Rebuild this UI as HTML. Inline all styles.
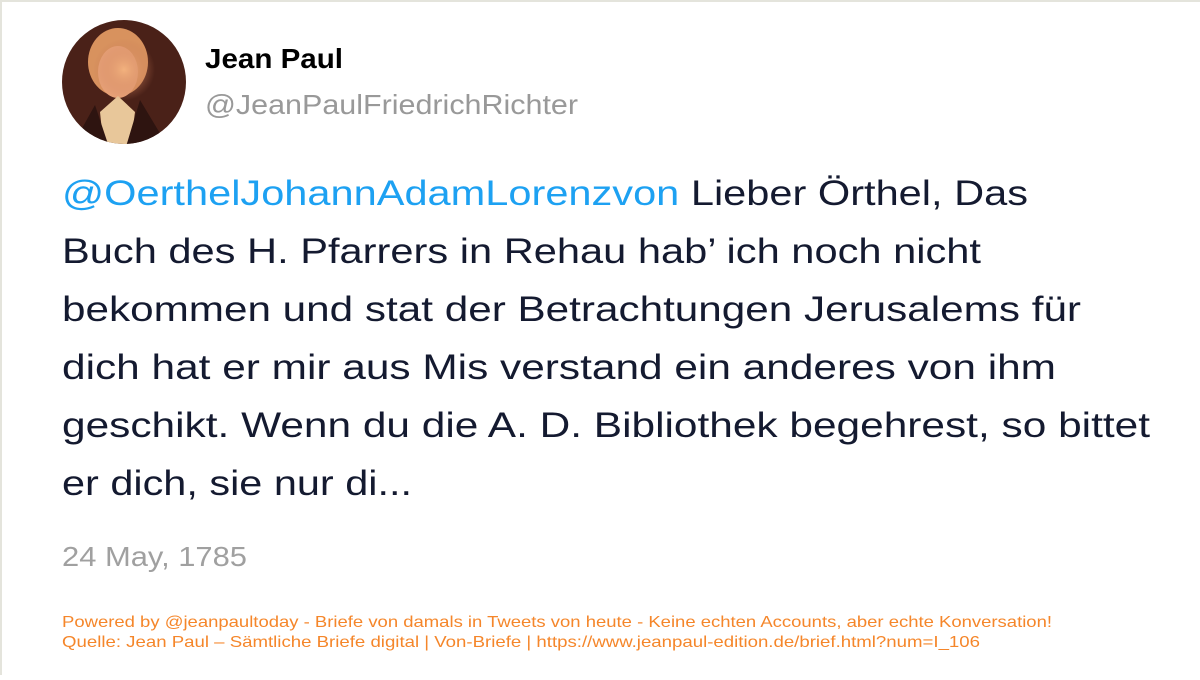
<!DOCTYPE html>
<html><head><meta charset="utf-8"><style>
html,body{margin:0;padding:0;background:#fff;}
body{width:1200px;height:675px;overflow:hidden;}
</style></head><body>
<svg width="1200" height="675" viewBox="0 0 1200 675" xmlns="http://www.w3.org/2000/svg" font-family="Liberation Sans, sans-serif">
<defs>
<radialGradient id="face" cx="0.5" cy="0.4" r="0.25">
<stop offset="0" stop-color="#f3b27e"/><stop offset="1" stop-color="#c07050" stop-opacity="0"/>
</radialGradient>
<clipPath id="c"><circle cx="124" cy="82" r="62"/></clipPath>
</defs>
<rect x="0" y="0" width="1200" height="675" fill="#fff"/>
<rect x="0" y="0" width="1200" height="2" fill="#e4e4dc"/>
<rect x="0" y="0" width="2" height="675" fill="#e4e4dc"/>
<g clip-path="url(#c)">
<rect x="60" y="18" width="130" height="130" fill="#4a2118"/>
<ellipse cx="118" cy="62" rx="30" ry="34" fill="#d8925e"/>
<ellipse cx="118" cy="72" rx="20" ry="26" fill="#e9a47a"/>
<path d="M100 112 L118 96 L135 112 L130 150 L104 150 Z" fill="#e8c79a"/>
<path d="M70 150 L95 105 L110 150 Z M170 150 L140 100 L125 150 Z" fill="#2e1410"/>
<circle cx="124" cy="82" r="62" fill="url(#face)"/>
</g>
<text x="205" y="68" font-size="28" font-weight="bold" fill="#000" textLength="138" lengthAdjust="spacingAndGlyphs">Jean Paul</text>
<text x="205" y="114" font-size="28" fill="#999" textLength="373" lengthAdjust="spacingAndGlyphs">@JeanPaulFriedrichRichter</text>
<g font-size="35" fill="#141a30">
<text x="62" y="205" textLength="966" lengthAdjust="spacingAndGlyphs"><tspan fill="#1da1f2">@OerthelJohannAdamLorenzvon</tspan> Lieber Örthel, Das</text>
<text x="62" y="263" textLength="919" lengthAdjust="spacingAndGlyphs">Buch des H. Pfarrers in Rehau hab’ ich noch nicht</text>
<text x="62" y="321" textLength="1019" lengthAdjust="spacingAndGlyphs">bekommen und stat der Betrachtungen Jerusalems für</text>
<text x="62" y="379" textLength="994" lengthAdjust="spacingAndGlyphs">dich hat er mir aus Mis verstand ein anderes von ihm</text>
<text x="62" y="437" textLength="1088" lengthAdjust="spacingAndGlyphs">geschikt. Wenn du die A. D. Bibliothek begehrest, so bittet</text>
<text x="62" y="495" textLength="350" lengthAdjust="spacingAndGlyphs">er dich, sie nur di...</text>
</g>
<text x="62" y="566" font-size="28" fill="#a0a0a0" textLength="185" lengthAdjust="spacingAndGlyphs">24 May, 1785</text>
<g font-size="16" fill="#f5862a">
<text x="62" y="627" textLength="990" lengthAdjust="spacingAndGlyphs">Powered by @jeanpaultoday - Briefe von damals in Tweets von heute - Keine echten Accounts, aber echte Konversation!</text>
<text x="62" y="647" textLength="918" lengthAdjust="spacingAndGlyphs">Quelle: Jean Paul – Sämtliche Briefe digital | Von-Briefe | https://www.jeanpaul-edition.de/brief.html?num=I_106</text>
</g>
</svg>
</body></html>
